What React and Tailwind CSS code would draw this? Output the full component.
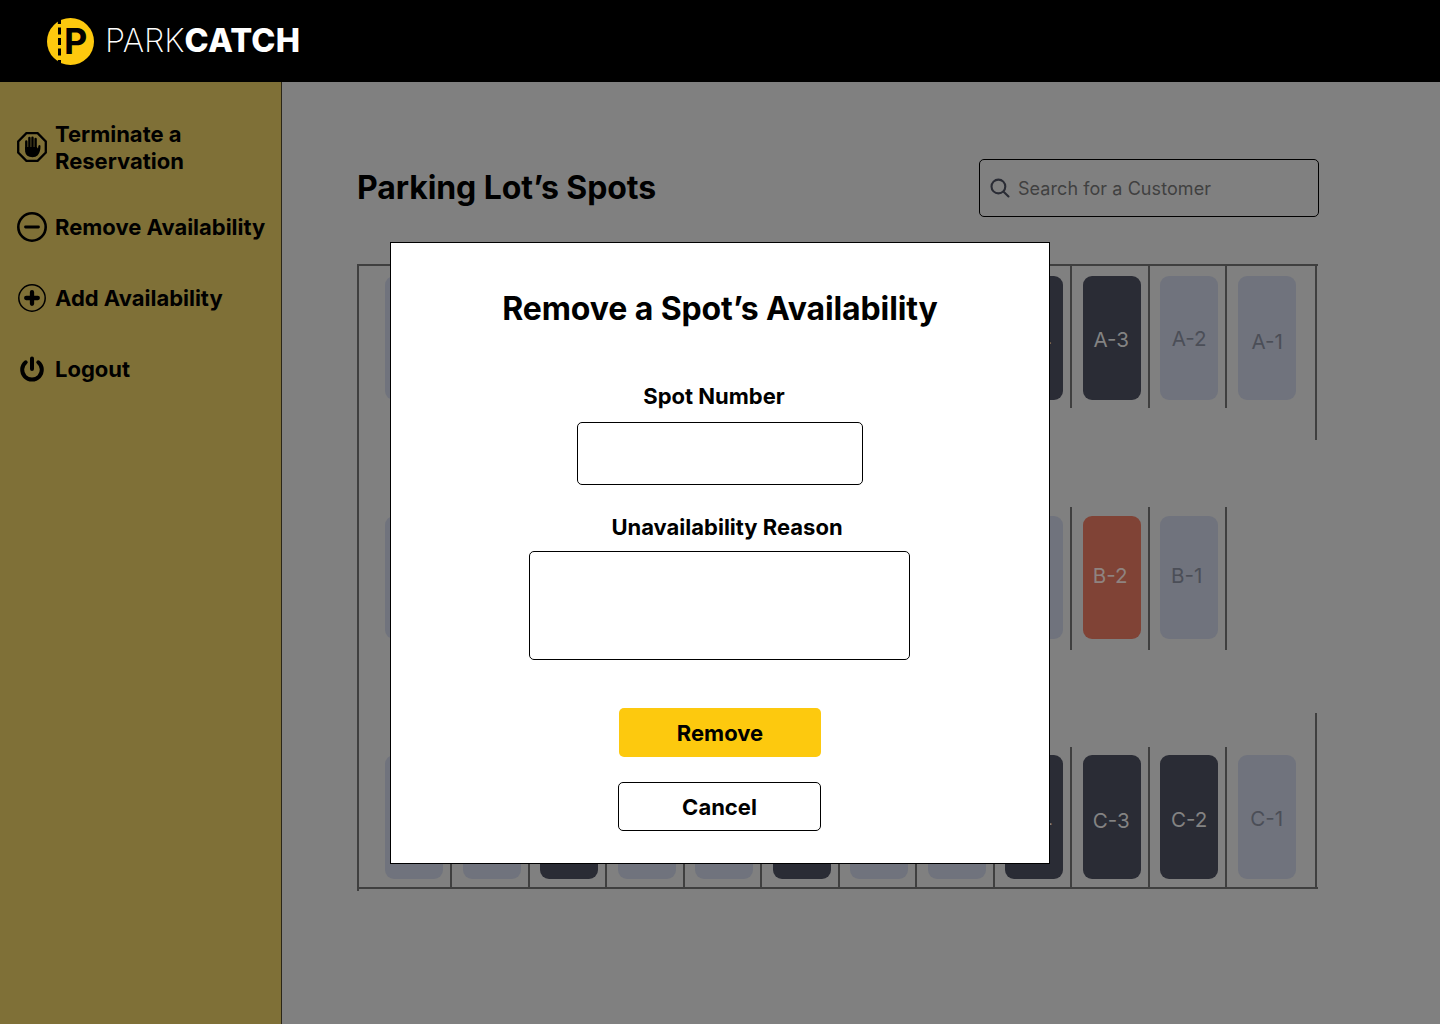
const LIGHT = "bg-[#70737d] text-[#4b4e57]";
const DARK = "bg-[#2a2c35] text-[#838383]";
const RED = "bg-[#804336] text-[#8f8380]";

const rowA = [
  ["", LIGHT], ["", LIGHT], ["", DARK], ["", LIGHT],
  ["", LIGHT], ["", LIGHT], ["", DARK], ["", LIGHT],
  ["A-4", DARK, "pt-[3px] pr-[1px]"], ["A-3", DARK, "pt-[3px] pr-[1px]"],
  ["A-2", LIGHT, "pt-[1px]"], ["A-1", LIGHT, "pl-[1px] pt-[8px]"],
];
const rowB = [
  ["", LIGHT], ["", LIGHT], ["", LIGHT], ["", DARK],
  ["", LIGHT], ["", LIGHT], ["", LIGHT], ["", DARK],
  ["", LIGHT], ["B-2", RED, "pr-[3px] pb-[3px]"],
  ["B-1", LIGHT, "pr-[5px] pb-[3px]"],
];
const rowC = [
  ["", LIGHT], ["", LIGHT], ["", DARK], ["", LIGHT],
  ["", LIGHT], ["", DARK], ["", LIGHT], ["", LIGHT],
  ["C-4", DARK, "pt-[8px] pr-[1px]"], ["C-3", DARK, "pt-[8px] pr-[1px]"],
  ["C-2", DARK, "pt-[6px]"], ["C-1", LIGHT, "pt-[4px]"],
];

function Row({ spots, className, cell, lastDivider }) {
  return (
    <div className={"flex pl-[15.5px] " + className}>
      {spots.map(([name, tone, shift], i) => (
        <div
          key={i}
          className={
            "w-[77.5px] shrink-0 pl-[10.7px] " + cell +
            (i < spots.length - 1 || lastDivider ? " border-r-2 border-[#3f3f3f]" : "")
          }
        >
          <div className={"flex h-[123.5px] w-[58px] items-center justify-center whitespace-nowrap rounded-[9px] text-[20.6px] leading-6 " + tone + " " + (shift || "")}>
            {name}
          </div>
        </div>
      ))}
    </div>
  );
}

function Logo() {
  return (
    <svg width="48" height="48" viewBox="0 0 48 48" className="mt-[2px]">
      <circle cx="23.5" cy="23.5" r="23.5" fill="#fdc90e" />
      <path d="M10.8 0H14V6H10.8ZM11 9.5H14V16.5H11ZM11 20H14V27H11ZM11 30.5H14V37.5H11ZM10.8 42H14V48H10.8Z" fill="#000" />
      <text x="17" y="36.4" fontFamily="Inter, sans-serif" fontWeight="700" fontSize="36" fill="#000">P</text>
    </svg>
  );
}

function StopHand() {
  return (
    <svg width="30" height="30" viewBox="0 0 30 30" fill="none" stroke="#000" className="-mt-[2px]">
      <path d="M9.4 1.2H20.6L28.8 9.4V20.6L20.6 28.8H9.4L1.2 20.6V9.4Z" strokeWidth="2.3" />
      <path d="M9.3 9.5V17M12.4 6V16M15.5 5.7V16M18.6 7V17" strokeWidth="2.4" strokeLinecap="round" />
      <path d="M8.1 15H19.8L21 16.5L21.4 13.8Q22.5 12.4 23.5 13.8Q23.6 20 20.8 23.3Q18.8 25.2 15.5 25.2Q8.8 25.2 8.1 19.5Z" fill="#000" stroke="none" />
    </svg>
  );
}
function MinusCircle() {
  return (
    <svg width="30" height="30" viewBox="0 0 30 30" fill="none" stroke="#000">
      <circle cx="15" cy="15" r="13.7" strokeWidth="2.6" />
      <path d="M8.5 15H21.5" strokeWidth="2.8" strokeLinecap="round" />
    </svg>
  );
}
function PlusCircle() {
  return (
    <svg width="30" height="30" viewBox="0 0 30 30" fill="none" stroke="#000">
      <circle cx="15" cy="15" r="13.2" strokeWidth="1.5" />
      <path d="M9.2 15H20.8M15 9.2V20.8" strokeWidth="4.3" strokeLinecap="round" />
    </svg>
  );
}
function Power() {
  return (
    <svg width="30" height="30" viewBox="0 0 30 30" fill="none" stroke="#000" strokeWidth="4" strokeLinecap="round">
      <path d="M8.7 8.3A9.8 9.8 0 1 0 21.3 8.3M15 4.5V15" />
    </svg>
  );
}

function NavItem({ icon, children, className }) {
  return (
    <a className={"flex items-center gap-2 whitespace-nowrap pl-[17px] text-[22px] font-bold leading-[27px] tracking-[-0.01px] text-black " + className}>
      {icon}
      <span>{children}</span>
    </a>
  );
}

export default function App() {
  return (
    <div className="relative flex h-[1024px] w-[1440px] flex-col overflow-hidden bg-[#808080] font-['Inter',sans-serif] [font-optical-sizing:none]">
      <header className="flex h-[82px] shrink-0 items-center bg-black pl-[47px] text-white">
        <Logo />
        <div className="ml-[10px] text-[32.5px] leading-10">
          <span className="font-extralight">PARK</span>
          <span className="font-extrabold tracking-[0.2px]">CATCH</span>
        </div>
      </header>

      <div className="flex flex-1">
        <nav className="w-[282px] shrink-0 border-r border-[#2a2618] bg-[#7f7037] pt-[39px]">
          <NavItem icon={<StopHand />} className="h-[54px]">Terminate a<br />Reservation</NavItem>
          <NavItem icon={<MinusCircle />} className="mt-[37px] h-[30px]">Remove Availability</NavItem>
          <NavItem icon={<PlusCircle />} className="mt-[41px] h-[30px]">Add Availability</NavItem>
          <NavItem icon={<Power />} className="mt-[41px] h-[30px]">Logout</NavItem>
        </nav>

        <main className="pl-[75px] pt-[77px]">
          <div className="flex h-[58px] w-[962px] items-center justify-between">
            <h1 className="text-[32px] font-bold leading-10 tracking-[-0.08px] text-black">Parking Lot’s Spots</h1>
            <div className="flex h-[58px] w-[340px] items-center rounded-[5px] border border-black pl-[10px]">
              <svg width="20" height="20" viewBox="0 0 20 20" fill="none" stroke="#2a2c35" strokeWidth="2.1" strokeLinecap="round">
                <circle cx="8.4" cy="8.5" r="6.9" />
                <path d="M13.6 13.7L18.5 18.5" />
              </svg>
              <span className="ml-2 pt-[2px] text-[18px] leading-6 tracking-[0.07px] text-[#404040]">Search for a Customer</span>
            </div>
          </div>

          <div className="mt-[47px] flex w-[961px]">
            <div className="h-[627px] w-[2px] shrink-0 bg-[#3f3f3f]" />
            <div className="h-[625px] flex-1 border-y-2 border-[#3f3f3f]">
              <div className="flex h-[241px] justify-between">
                <Row spots={rowA} className="h-[142px]" cell="pt-[10.3px]" />
                <div className="mr-[1px] h-[174px] w-[2px] bg-[#3f3f3f]" />
              </div>
              <Row spots={rowB} className="h-[143px]" cell="pt-[8.7px]" lastDivider />
              <div className="flex h-[237px] justify-between">
                <Row spots={rowC} className="mt-[97px] h-[140px]" cell="pt-[8.2px]" />
                <div className="mr-[1px] mt-[63px] h-[174px] w-[2px] bg-[#3f3f3f]" />
              </div>
            </div>
          </div>
        </main>
      </div>

      <section className="absolute left-[390px] top-[242px] flex h-[622px] w-[660px] flex-col items-center border border-black bg-white text-black">
        <h2 className="mt-[46px] text-[32px] font-bold leading-10 tracking-[-0.1px]">Remove a Spot’s Availability</h2>
        <label className="mt-[54px] -translate-x-[6px] text-[22px] font-bold leading-[27px]">Spot Number</label>
        <div className="mt-[12px] h-[63px] w-[286px] rounded-[5px] border border-black" />
        <label className="mt-[29px] translate-x-[7px] text-[22px] font-bold leading-[27px]">Unavailability Reason</label>
        <div className="mr-px mt-[10px] h-[109px] w-[381px] rounded-[5px] border border-black" />
        <button className="mt-[48px] h-[49px] w-[202px] rounded-[5px] bg-[#fdc90e] pt-[2px] text-[22px] font-bold">Remove</button>
        <button className="mr-px mt-[25px] h-[49px] w-[203px] rounded-[5px] border border-black pt-[2px] text-[22px] font-bold">Cancel</button>
      </section>
    </div>
  );
}
